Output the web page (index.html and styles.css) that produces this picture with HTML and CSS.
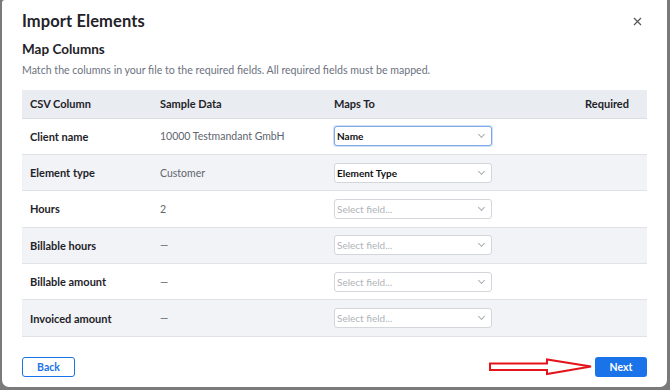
FILE: index.html
```html
<!DOCTYPE html>
<html lang="en">
<head>
  <meta charset="UTF-8">
  <meta name="viewport" content="width=device-width, initial-scale=1.0">
  <title>Import Elements</title>
  <link rel="stylesheet" href="styles.css">
</head>
<body>
  <div class="modal">
    <header class="modal-head">
      <h1>Import Elements</h1>
      <button class="close" aria-label="Close">
        <svg width="9" height="9" viewBox="0 0 9 9"><path d="M1 1L8 8M8 1L1 8" stroke="#555" stroke-width="1.2" fill="none"/></svg>
      </button>
    </header>

    <h2>Map Columns</h2>
    <p class="desc">Match the columns in your file to the required fields. All required fields must be mapped.</p>

    <table class="map">
      <thead>
        <tr><th>CSV Column</th><th>Sample Data</th><th>Maps To</th><th class="req">Required</th></tr>
      </thead>
      <tbody>
        <tr>
          <td class="name">Client name</td><td class="sample">10000 Testmandant GmbH</td>
          <td><div class="select focus">Name<span class="chev"></span></div></td><td></td>
        </tr>
        <tr>
          <td class="name">Element type</td><td class="sample">Customer</td>
          <td><div class="select">Element Type<span class="chev"></span></div></td><td></td>
        </tr>
        <tr>
          <td class="name">Hours</td><td class="sample">2</td>
          <td><div class="select empty">Select field...<span class="chev"></span></div></td><td></td>
        </tr>
        <tr>
          <td class="name">Billable hours</td><td class="sample">—</td>
          <td><div class="select empty">Select field...<span class="chev"></span></div></td><td></td>
        </tr>
        <tr>
          <td class="name">Billable amount</td><td class="sample">—</td>
          <td><div class="select empty">Select field...<span class="chev"></span></div></td><td></td>
        </tr>
        <tr>
          <td class="name">Invoiced amount</td><td class="sample">—</td>
          <td><div class="select empty">Select field...<span class="chev"></span></div></td><td></td>
        </tr>
      </tbody>
    </table>

    <footer class="modal-foot">
      <button class="btn back">Back</button>
      <div class="next-wrap">
        <svg class="arrow" width="104" height="18" viewBox="0 0 104 18">
          <path d="M1 5.5H58V1.5L102 8.5L58 16V12H1Z" fill="#fff" stroke="#e3141c" stroke-width="2" stroke-linejoin="miter"/>
        </svg>
        <button class="btn next">Next</button>
      </div>
    </footer>
  </div>
</body>
</html>
```

FILE: styles.css
```css
* { margin:0; padding:0; box-sizing:border-box; }
body {
  font-family: Lato, "Open Sans", sans-serif; color:#1f2329;
  background:#7a7a7a;
  padding:0 3px 3px 2px; height:390px; overflow:hidden;
}
/* Окно */
.modal {
  background:#fff; height:387px; border-radius:3px 0 7px 7px;
  padding:0 20px 0 20px;
}
.modal-head { display:flex; justify-content:space-between; align-items:center; padding-top:9px; height:33px; }
.modal-head h1 { font-size:16.5px; font-weight:700; line-height:22px; letter-spacing:0.1px; }
.close { border:0; background:none; width:12px; height:12px; display:flex; align-items:center; justify-content:center; margin-right:4px; }
h2 { font-size:13.5px; font-weight:700; margin-top:8px; line-height:17px; }
.desc { font-size:10.6px; color:#6b7280; margin-top:5px; line-height:14px; }
/* Таблица */
.map { width:625px; border-collapse:collapse; margin-top:13px; font-size:11px; }
.map th { background:#e9ecf0; height:28px; text-align:left; font-weight:700; padding-left:8px; border-bottom:1px solid #dadee3; }
.map th:nth-child(1) { width:130px; }
.map th:nth-child(2) { width:174px; }
.map th:nth-child(3) { width:200px; }
.map th.req { text-align:right; padding-right:18px; }
.map td { height:36.4px; padding-left:8px; border-bottom:1px solid #dfe2e6; }
.map tbody tr:nth-child(even) td { background:#f1f3f6; }
.map td.name { font-weight:700; }
.map td.sample { color:#60656d; font-size:10.5px; }
/* Селекты */
.select {
  position:relative; width:158px; height:20px; border:1px solid #d3d7dc; border-radius:3px; background:#fff;
  font-size:10px; line-height:18px; padding-left:2px; color:#111; font-weight:700;
}
.select.focus { border-color:#7da9e8; box-shadow:0 0 0 1px #cfe0f7; }
.select.empty { color:#b0b4ba; font-weight:400; }
.chev {
  position:absolute; right:7px; top:5px; width:5px; height:5px;
  border-right:1px solid #a9adb3; border-bottom:1px solid #a9adb3; transform:rotate(45deg);
}
/* Кнопки */
.modal-foot { display:flex; justify-content:space-between; align-items:center; margin-top:20px; }
.next-wrap { display:flex; align-items:center; gap:2px; }
.btn { height:20px; border-radius:3px; font-family:inherit; font-size:10.5px; font-weight:700; }
.back { width:53px; border:1.5px solid #1a73e8; background:#fff; color:#1a73e8; }
.next { width:52px; border:0; background:#1a73e8; color:#fff; }
.arrow { display:block; }
```
